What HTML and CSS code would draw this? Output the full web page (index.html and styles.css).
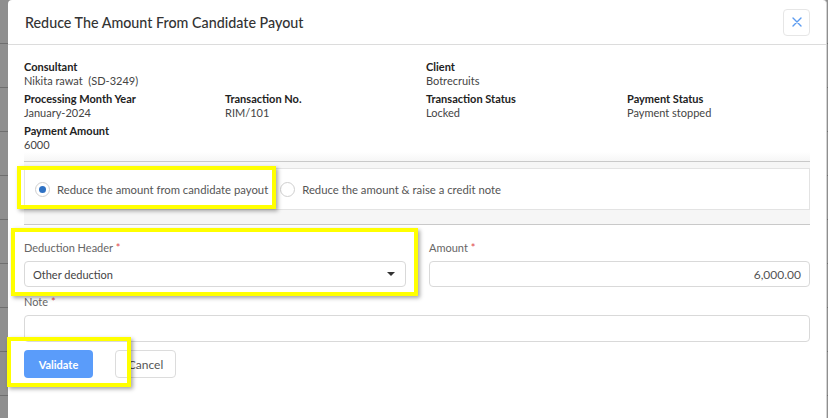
FILE: index.html
```html
<!DOCTYPE html>
<html lang="en">
<head>
    <meta charset="UTF-8">
    <meta name="viewport" content="width=device-width, initial-scale=1.0">
    <title>Reduce The Amount From Candidate Payout</title>
    <link rel="stylesheet" href="styles.css">
</head>
<body>
    <div class="backdrop">
        <div class="modal">
            <!-- Header -->
            <div class="modal-header">
                <h2>Reduce The Amount From Candidate Payout</h2>
                <button class="close-btn" title="Close">
                    <svg width="10" height="10" viewBox="0 0 10 10"><path d="M1 1L9 9M9 1L1 9" stroke="#5b9bf0" stroke-width="1.4" stroke-linecap="round"/></svg>
                </button>
            </div>

            <div class="modal-body">
                <!-- Payout details -->
                <div class="info-grid">
                    <div class="info-item">
                        <div class="info-label">Consultant</div>
                        <div class="info-value">Nikita rawat&nbsp; (SD-3249)</div>
                    </div>
                    <div class="info-item"></div>
                    <div class="info-item">
                        <div class="info-label">Client</div>
                        <div class="info-value">Botrecruits</div>
                    </div>
                    <div class="info-item"></div>

                    <div class="info-item">
                        <div class="info-label">Processing Month Year</div>
                        <div class="info-value">January-2024</div>
                    </div>
                    <div class="info-item">
                        <div class="info-label">Transaction No.</div>
                        <div class="info-value">RIM/101</div>
                    </div>
                    <div class="info-item">
                        <div class="info-label">Transaction Status</div>
                        <div class="info-value">Locked</div>
                    </div>
                    <div class="info-item">
                        <div class="info-label">Payment Status</div>
                        <div class="info-value">Payment stopped</div>
                    </div>

                    <div class="info-item">
                        <div class="info-label">Payment Amount</div>
                        <div class="info-value">6000</div>
                    </div>
                </div>

                <!-- Option choice -->
                <div class="option-section">
                    <div class="option-card">
                        <label class="radio-item">
                            <span class="radio checked"></span>
                            Reduce the amount from candidate payout
                        </label>
                        <label class="radio-item">
                            <span class="radio"></span>
                            Reduce the amount &amp; raise a credit note
                        </label>
                    </div>
                </div>

                <!-- Form -->
                <div class="form-row">
                    <div class="form-group">
                        <label class="form-label">Deduction Header <span class="req">*</span></label>
                        <div class="form-control select">
                            <span>Other deduction</span>
                            <span class="caret"></span>
                        </div>
                    </div>
                    <div class="form-group">
                        <label class="form-label">Amount <span class="req">*</span></label>
                        <div class="form-control amount">6,000.00</div>
                    </div>
                </div>

                <div class="form-group">
                    <label class="form-label">Note <span class="req">*</span></label>
                    <div class="form-control note"></div>
                </div>

                <div class="actions">
                    <button class="btn btn-primary">Validate</button>
                    <button class="btn btn-default">Cancel</button>
                </div>
            </div>

            <!-- Review highlights -->
            <div class="highlight hl-radio"></div>
            <div class="highlight hl-deduction"></div>
            <div class="highlight hl-validate"></div>
        </div>
    </div>
</body>
</html>
```

FILE: styles.css
```css
body {
    margin: 0;
    font-family: "Lato", "Open Sans", sans-serif;
    background: #8c8c8c;
    overflow: hidden;
}
.backdrop {
    height: 418px;
    padding-left: 8px;
    padding-right: 1px;
    background:
        repeating-linear-gradient(to bottom, transparent 0, transparent 43px, #6f6f6f 43px, #6f6f6f 44px),
        #8f8f8f;
}
.modal {
    position: relative;
    height: 418px;
    background: white;
    border-radius: 4px 4px 0 0;
    border-right: 1px solid #d4d4d4;
}
.modal-header {
    display: flex;
    align-items: center;
    justify-content: space-between;
    height: 45px;
    padding: 0 16px 0 17px;
    border-bottom: 1px solid #dcdcdc;
    box-sizing: border-box;
}
.modal-header h2 {
    margin: 0;
    font-size: 14.3px;
    font-weight: 500;
    color: #333;
}
.close-btn {
    width: 27px;
    height: 27px;
    border: 1px solid #e6e6e6;
    border-radius: 4px;
    background: white;
    display: flex;
    align-items: center;
    justify-content: center;
    padding: 0;
}
.modal-body {
    padding: 15px 16px 0 16px;
}
.info-grid {
    display: grid;
    grid-template-columns: repeat(4, 201px);
    row-gap: 4px;
}
.info-label {
    font-size: 11px;
    line-height: 14px;
    font-weight: bold;
    color: #222;
}
.info-value {
    font-size: 11px;
    line-height: 14px;
    color: #444;
}
.option-section {
    padding: 9px 0 14px 0;
    background: linear-gradient(to bottom, #fff 0, #f6f6f6 9px, #f6f6f6 100%);
    border-bottom: 1px solid #c9c9c9;
    position: relative;
}
.option-section::before {
    content: "";
    position: absolute;
    left: 0;
    right: 0;
    top: 9px;
    border-top: 1px solid #c9c9c9;
}
.option-card {
    margin-top: 7px;
    height: 42px;
    background: white;
    border: 1px solid #e3e3e3;
    display: flex;
    align-items: center;
    box-sizing: border-box;
    padding-left: 10px;
}
.radio-item {
    display: flex;
    align-items: center;
    gap: 7px;
    font-size: 11.3px;
    color: #555;
    margin-right: 12px;
}
.radio {
    width: 15px;
    height: 15px;
    border: 1px solid #cfcfcf;
    border-radius: 50%;
    box-sizing: border-box;
    display: flex;
    align-items: center;
    justify-content: center;
}
.radio.checked::after {
    content: "";
    width: 7px;
    height: 7px;
    border-radius: 50%;
    background: #2f72c4;
}
.form-row {
    display: grid;
    grid-template-columns: 382px 381px;
    column-gap: 23px;
    margin-top: 16px;
}
.form-group {
    margin-bottom: 8px;
}
.form-label {
    display: block;
    font-size: 11px;
    line-height: 14px;
    color: #666;
    margin-bottom: 6px;
}
.req {
    color: #e04b4b;
}
.form-control {
    height: 26px;
    border: 1px solid #d9d9d9;
    border-radius: 4px;
    box-sizing: border-box;
    font-size: 11px;
    color: #444;
    display: flex;
    align-items: center;
    padding: 0 8px;
}
.form-control.select {
    justify-content: space-between;
    padding-right: 10px;
}
.caret {
    width: 0;
    height: 0;
    border-left: 4px solid transparent;
    border-right: 4px solid transparent;
    border-top: 4px solid #333;
}
.form-control.amount {
    justify-content: flex-end;
    color: #555;
    font-size: 12px;
}
.form-control.note {
    height: 27px;
}
.actions {
    display: flex;
    gap: 22px;
}
.btn {
    height: 28px;
    border-radius: 4px;
    font-family: inherit;
    font-size: 11px;
    padding: 0 10px;
}
.btn-primary {
    background: #5a9cfa;
    border: none;
    color: white;
    font-weight: bold;
    width: 69px;
}
.btn-default {
    background: white;
    border: 1px solid #dcdcdc;
    color: #555;
    width: 61px;
    font-size: 12px;
}
.highlight {
    position: absolute;
    border: 4px solid #ffff00;
    box-shadow: 2px 2px 4px rgba(0,0,0,0.35);
    box-sizing: border-box;
}
.hl-radio {
    left: 9px;
    top: 166px;
    width: 259px;
    height: 43px;
}
.hl-deduction {
    left: 3px;
    top: 228px;
    width: 407px;
    height: 68px;
}
.hl-validate {
    left: -1px;
    top: 337px;
    width: 124px;
    height: 50px;
}
```
